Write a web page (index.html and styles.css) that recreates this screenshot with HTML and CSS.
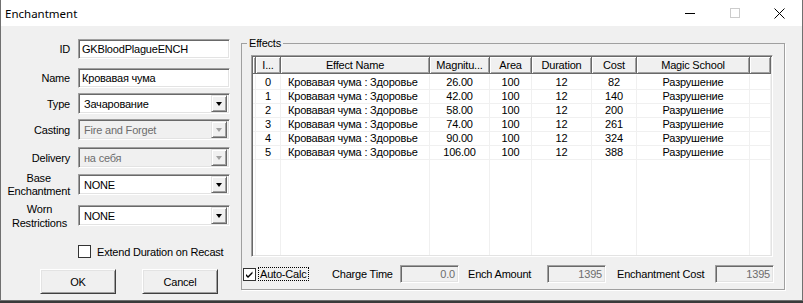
FILE: index.html
```html
<!DOCTYPE html>
<html lang="ru">
<head>
    <meta charset="UTF-8">
    <title>Enchantment</title>
    <link rel="stylesheet" href="styles.css">
</head>
<body>
    <div class="window">
        <div class="titlebar">
            <span class="title">Enchantment</span>
            <div class="caption-buttons">
                <span class="cap-btn">
                    <svg width="10" height="10" viewBox="0 0 10 10"><line x1="0" y1="5.5" x2="10" y2="5.5" stroke="#000" stroke-width="1"/></svg>
                </span>
                <span class="cap-btn">
                    <svg width="10" height="10" viewBox="0 0 10 10"><rect x="0.5" y="0.5" width="9" height="9" fill="none" stroke="#cccccc" stroke-width="1"/></svg>
                </span>
                <span class="cap-btn">
                    <svg width="11" height="11" viewBox="0 0 11 11"><path d="M0.5 0.5 L10.5 10.5 M10.5 0.5 L0.5 10.5" stroke="#000" stroke-width="1" fill="none"/></svg>
                </span>
            </div>
        </div>

        <div class="client">
            <div class="left-panel">
                <div class="field row-id">
                    <div class="field-label">ID</div>
                    <div class="edit">GKBloodPlagueENCH</div>
                </div>
                <div class="field row-name">
                    <div class="field-label">Name</div>
                    <div class="edit">Кровавая чума</div>
                </div>
                <div class="field row-type">
                    <div class="field-label">Type</div>
                    <div class="combo"><span class="combo-text">Зачарование</span><span class="drop-btn"></span></div>
                </div>
                <div class="field row-casting">
                    <div class="field-label">Casting</div>
                    <div class="combo disabled"><span class="combo-text">Fire and Forget</span><span class="drop-btn"></span></div>
                </div>
                <div class="field row-delivery">
                    <div class="field-label">Delivery</div>
                    <div class="combo disabled"><span class="combo-text">на себя</span><span class="drop-btn"></span></div>
                </div>
                <div class="field row-base">
                    <div class="field-label"><span class="two-line">Base<br>Enchantment</span></div>
                    <div class="combo"><span class="combo-text">NONE</span><span class="drop-btn"></span></div>
                </div>
                <div class="field row-worn">
                    <div class="field-label"><span class="two-line worn">Worn<br>Restrictions</span></div>
                    <div class="combo"><span class="combo-text">NONE</span><span class="drop-btn"></span></div>
                </div>
                <div class="check-row">
                    <span class="checkbox"></span>
                    <span>Extend Duration on Recast</span>
                </div>
                <div class="buttons">
                    <button class="btn">OK</button>
                    <button class="btn">Cancel</button>
                </div>
            </div>

            <fieldset class="effects">
                <legend>Effects</legend>
                <div class="listview">
                    <table class="effects-table">
                        <colgroup>
                            <col class="c-pad">
                            <col class="c-index">
                            <col class="c-name">
                            <col class="c-mag">
                            <col class="c-area">
                            <col class="c-dur">
                            <col class="c-cost">
                            <col class="c-school">
                            <col class="c-fill">
                        </colgroup>
                        <thead>
                            <tr>
                                <th></th>
                                <th>I...</th>
                                <th>Effect Name</th>
                                <th>Magnitu...</th>
                                <th>Area</th>
                                <th>Duration</th>
                                <th>Cost</th>
                                <th>Magic School</th>
                                <th></th>
                            </tr>
                        </thead>
                        <tbody>
                            <tr><td></td><td>0</td><td class="name">Кровавая чума : Здоровье</td><td>26.00</td><td>100</td><td>12</td><td>82</td><td>Разрушение</td><td></td></tr>
                            <tr><td></td><td>1</td><td class="name">Кровавая чума : Здоровье</td><td>42.00</td><td>100</td><td>12</td><td>140</td><td>Разрушение</td><td></td></tr>
                            <tr><td></td><td>2</td><td class="name">Кровавая чума : Здоровье</td><td>58.00</td><td>100</td><td>12</td><td>200</td><td>Разрушение</td><td></td></tr>
                            <tr><td></td><td>3</td><td class="name">Кровавая чума : Здоровье</td><td>74.00</td><td>100</td><td>12</td><td>261</td><td>Разрушение</td><td></td></tr>
                            <tr><td></td><td>4</td><td class="name">Кровавая чума : Здоровье</td><td>90.00</td><td>100</td><td>12</td><td>324</td><td>Разрушение</td><td></td></tr>
                            <tr><td></td><td>5</td><td class="name">Кровавая чума : Здоровье</td><td>106.00</td><td>100</td><td>12</td><td>388</td><td>Разрушение</td><td></td></tr>
                            <tr class="filler"><td></td><td></td><td></td><td></td><td></td><td></td><td></td><td></td><td></td></tr>
                        </tbody>
                    </table>
                </div>

                <div class="calc-row">
                    <div class="auto-calc">
                        <span class="checkbox checked">
                            <svg width="9" height="9" viewBox="0 0 9 9"><path d="M1 4 L3 6 L7.5 1.5 L7.5 3.5 L3 8 L1 6 Z" fill="#000"/></svg>
                        </span>
                        <span class="focus-text">Auto-Calc</span>
                    </div>
                    <span class="calc-label lbl-charge">Charge Time</span>
                    <span class="readonly">0.0</span>
                    <span class="calc-label lbl-amount">Ench Amount</span>
                    <span class="readonly">1395</span>
                    <span class="calc-label lbl-cost">Enchantment Cost</span>
                    <span class="readonly">1395</span>
                </div>
            </fieldset>
        </div>
    </div>
</body>
</html>
```

FILE: styles.css
```css
body {
    margin: 0;
    background-color: #3a3a3a;
    font-family: "Liberation Sans", Arial, sans-serif;
    font-size: 11px;
    letter-spacing: -0.2px;
    color: #000;
}
.window {
    width: 803px;
    height: 301px;
    box-sizing: border-box;
    background-color: #f0f0f0;
    border: 1px solid #707070;
    border-top: none;
    overflow: hidden;
}
.titlebar {
    height: 26px;
    background-color: #fff;
    display: flex;
    align-items: center;
    justify-content: space-between;
}
.title {
    font-family: "Noto Sans", sans-serif;
    font-size: 11.5px;
    letter-spacing: 0;
    padding-left: 4px;
}
.caption-buttons {
    display: flex;
    height: 100%;
}
.cap-btn {
    width: 45px;
    height: 100%;
    display: flex;
    align-items: center;
    justify-content: center;
}
.client {
    display: flex;
    align-items: flex-start;
}
.left-panel {
    width: 240px;
    padding-top: 13px;
}

/* label + control rows */
.field {
    display: flex;
    align-items: center;
    height: 20px;
}
.field-label {
    width: 69px;
    margin-right: 8px;
    text-align: right;
    flex-shrink: 0;
}
.two-line {
    display: inline-block;
    text-align: center;
    line-height: 13px;
}
.two-line.worn {
    margin-right: 3px;
    line-height: 14px;
}
.row-name { margin-top: 9px; }
.row-type { margin-top: 5px; height: 21px; }
.row-casting { margin-top: 5px; height: 21px; }
.row-delivery { margin-top: 7px; height: 21px; }
.row-base { margin-top: 6px; height: 21px; }
.row-worn { margin-top: 10px; height: 21px; }

.edit,
.combo,
.readonly {
    box-sizing: border-box;
    background-color: #fff;
    border: 1px solid;
    border-color: #a0a0a0 #fff #fff #a0a0a0;
    box-shadow: inset 1px 1px #696969, inset -1px -1px #e3e3e3;
}
.edit {
    width: 152px;
    height: 20px;
    padding: 0 3px;
    line-height: 18px;
}
.combo {
    width: 152px;
    height: 21px;
    display: flex;
    align-items: center;
    padding: 2px;
}
.combo-text {
    flex: 1;
    padding-left: 3px;
}
.drop-btn {
    width: 16px;
    height: 17px;
    box-sizing: border-box;
    background-color: #f0f0f0;
    border: 1px solid;
    border-color: #e3e3e3 #696969 #696969 #e3e3e3;
    box-shadow: inset 1px 1px #fff, inset -1px -1px #a0a0a0;
    display: flex;
    align-items: center;
    justify-content: center;
}
.drop-btn::after {
    content: "";
    border-left: 3.5px solid transparent;
    border-right: 3.5px solid transparent;
    border-top: 4px solid #000;
    margin-top: 1px;
}
.combo.disabled {
    background-color: #f0f0f0;
    color: #6d6d6d;
}
.combo.disabled .drop-btn::after {
    border-top-color: #a0a0a0;
}

.check-row {
    display: flex;
    align-items: center;
    margin-top: 19px;
    padding-left: 77px;
    height: 13px;
}
.checkbox {
    width: 13px;
    height: 13px;
    box-sizing: border-box;
    border: 1px solid #333;
    background-color: #fff;
    margin-right: 6px;
    display: flex;
    align-items: center;
    justify-content: center;
    flex-shrink: 0;
}
.buttons {
    display: flex;
    gap: 26px;
    margin-top: 11px;
    padding-left: 39px;
}
.btn {
    width: 76px;
    height: 25px;
    font-family: inherit;
    font-size: 11px;
    letter-spacing: -0.2px;
    background-color: #f0f0f0;
    border: 1px solid;
    border-color: #fff #404040 #404040 #fff;
    box-shadow: inset 1px 1px #e3e3e3, inset -1px -1px #a0a0a0;
    padding: 0;
}

/* Effects group */
.effects {
    width: 544px;
    box-sizing: border-box;
    margin: 11px 0 0 0;
    padding: 0 0 6px 0;
    border: 1px solid #a0a0a0;
    box-shadow: 1px 1px 0 #fff;
    min-inline-size: 0;
}
.effects legend {
    margin-left: 5px;
    padding: 0 2px;
    line-height: 13px;
    background-color: #f0f0f0;
}
.listview {
    width: 522px;
    height: 202px;
    margin: 5px 0 0 9px;
    box-sizing: border-box;
    background-color: #fff;
    border: 1px solid;
    border-color: #a0a0a0 #fff #fff #a0a0a0;
    box-shadow: inset 1px 1px #696969, inset -1px -1px #e3e3e3;
    padding: 1px;
}
.effects-table {
    width: 518px;
    height: 198px;
    table-layout: fixed;
    border-collapse: separate;
    border-spacing: 0;
}
.c-pad { width: 3px; }
.c-index { width: 25px; }
.c-name { width: 149px; }
.c-mag { width: 60px; }
.c-area { width: 42px; }
.c-dur { width: 60px; }
.c-cost { width: 45px; }
.c-school { width: 113px; }
.c-fill { width: 21px; }

.effects-table th {
    height: 17px;
    box-sizing: border-box;
    padding: 0;
    font-weight: normal;
    background-color: #f0f0f0;
    border-right: 1px solid #696969;
    border-bottom: 1px solid #696969;
    box-shadow: inset 1px 1px #fff, inset -1px -1px #a0a0a0;
    white-space: nowrap;
    overflow: hidden;
}
.effects-table td {
    height: 14px;
    box-sizing: border-box;
    padding: 0;
    line-height: 13px;
    text-align: center;
    white-space: nowrap;
    overflow: hidden;
    border-right: 1px solid #f0f0f0;
    border-bottom: 1px solid #f0f0f0;
}
.effects-table tbody tr:first-child td {
    height: 16px;
    border-top: 2px solid #fff;
}
.effects-table td.name {
    text-align: left;
    padding-left: 7px;
}
.effects-table tr.filler td {
    height: auto;
    border-bottom: none;
}

.calc-row {
    display: flex;
    align-items: center;
    height: 18px;
    margin-top: 8px;
    padding-left: 1px;
}
.auto-calc {
    width: 89px;
    display: flex;
    align-items: center;
}
.auto-calc .checkbox {
    margin-right: 2px;
}
.focus-text {
    border: 1px dotted #000;
    padding: 0 1px;
    line-height: 12px;
}
.calc-label {
    flex-shrink: 0;
}
.lbl-charge { width: 68px; }
.lbl-amount { width: 79px; margin-left: 9px; }
.lbl-cost { width: 98px; margin-left: 11px; }
.readonly {
    width: 59px;
    height: 18px;
    background-color: #f0f0f0;
    color: #6d6d6d;
    text-align: right;
    padding-right: 3px;
    line-height: 16px;
}
```
